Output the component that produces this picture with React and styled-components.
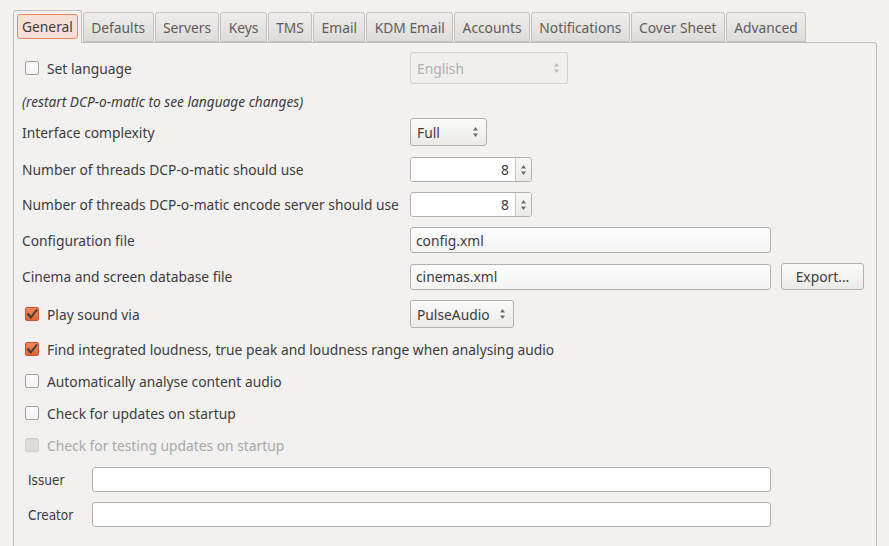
import React from 'react';
import styled, { createGlobalStyle } from 'styled-components';

const GlobalStyle = createGlobalStyle`
  html, body {
    margin: 0;
    padding: 0;
    background: #f2f1f0;
  }
  body {
    font-family: "Noto Sans", "DejaVu Sans", sans-serif;
    font-size: 13.8px;
    color: #3c3c3c;
    overflow: hidden;
  }
`;

const Page = styled.div`
  width: 889px;
  height: 546px;
  padding: 10px 0 0 13px;
  box-sizing: border-box;
  overflow: hidden;
`;

const TabBar = styled.div`
  display: flex;
  align-items: flex-end;
  gap: 1px;
  height: 32px;
  position: relative;
  z-index: 1;
`;

const Tab = styled.div`
  box-sizing: border-box;
  height: ${p => (p.$active ? '33px' : '30px')};
  padding: ${p => (p.$active ? '3px 3px 4px' : '0 7.35px')};
  display: flex;
  align-items: ${p => (p.$active ? 'stretch' : 'center')};
  border: 1px solid ${p => (p.$active ? '#c2c0bc' : '#c5c3bf')};
  border-bottom: ${p => (p.$active ? 'none' : '1px solid #c5c3bf')};
  border-radius: 3px 3px 0 0;
  background: ${p => (p.$active ? '#f2f1f0' : 'linear-gradient(#efeeec, #dcdbd8)')};
  color: ${p => (p.$active ? '#3c3c3c' : '#5d5d5d')};
  white-space: nowrap;
  margin-bottom: ${p => (p.$active ? '-1px' : '0')};
`;

const TabFocus = styled.div`
  display: flex;
  align-items: center;
  padding: 0 4px;
  border: 1px solid #f0875a;
  border-radius: 3px;
  background: #f6e0d7;
`;

const Panel = styled.div`
  width: 864px;
  height: 520px;
  box-sizing: border-box;
  border: 1px solid #bebcb8;
  border-radius: 0 3px 0 0;
  padding: 0 0 0 8px;
  display: flex;
  flex-direction: column;
`;

const Row = styled.div`
  display: flex;
  align-items: center;
  height: ${p => p.$h}px;
  margin-top: ${p => p.$mt}px;
  flex-shrink: 0;
`;

const Label = styled.div`
  width: 388px;
  flex-shrink: 0;
  white-space: nowrap;
`;

const Note = styled.div`
  font-style: italic;
  font-size: 13.7px;
`;

const CheckWrap = styled.label`
  display: flex;
  align-items: center;
  gap: 8px;
  box-sizing: border-box;
  width: ${p => (p.$w ? `${p.$w}px` : 'auto')};
  flex-shrink: 0;
  padding-left: 3px;
  white-space: nowrap;
  color: ${p => (p.$disabled ? '#a9a8a6' : '#3c3c3c')};
`;

const Box = styled.span`
  width: 14px;
  height: 14px;
  box-sizing: border-box;
  border-radius: 2px;
  display: flex;
  align-items: center;
  justify-content: center;
  border: 1px solid ${p => (p.$checked ? '#c2552a' : p.$disabled ? '#cfcecc' : '#a3a19e')};
  background: ${p =>
    p.$checked
      ? 'linear-gradient(#f5885a, #df6535)'
      : p.$disabled
      ? '#dddcda'
      : 'linear-gradient(#ffffff, #f4f4f4)'};
`;

const Select = styled.div`
  box-sizing: border-box;
  width: ${p => p.$w}px;
  height: ${p => p.$h || 28}px;
  display: flex;
  align-items: center;
  justify-content: space-between;
  padding: 0 7px 0 6px;
  border: 1px solid ${p => (p.$disabled ? '#d2d0cd' : '#b3b1ad')};
  border-radius: 3px;
  background: ${p => (p.$disabled ? '#f0efee' : 'linear-gradient(#fbfbfa, #ebeae8)')};
  color: ${p => (p.$disabled ? '#b0afad' : '#3c3c3c')};
`;

const Spin = styled.div`
  display: flex;
  height: 25px;
  box-sizing: border-box;
  border: 1px solid #b3b1ad;
  border-radius: 3px;
  overflow: hidden;
`;

const SpinValue = styled.div`
  width: 105px;
  background: #fff;
  display: flex;
  align-items: center;
  justify-content: flex-end;
  padding-right: 6px;
  box-sizing: border-box;
  border-right: 1px solid #c9c7c3;
`;

const SpinButtons = styled.div`
  width: 15px;
  background: linear-gradient(#f7f7f6, #ebeae8);
  display: flex;
  align-items: center;
  justify-content: center;
`;

const TextInput = styled.div`
  box-sizing: border-box;
  width: ${p => p.$w}px;
  height: ${p => p.$h || 26}px;
  display: flex;
  align-items: center;
  padding: 0 5px;
  border: 1px solid #b3b1ad;
  border-radius: 3px;
  background: ${p => (p.$plain ? '#ffffff' : 'linear-gradient(#fdfdfd, #f3f3f2)')};
  white-space: nowrap;
`;

const Button = styled.div`
  box-sizing: border-box;
  width: 83px;
  height: 27px;
  margin-left: 10px;
  display: flex;
  align-items: center;
  justify-content: center;
  border: 1px solid #b3b1ad;
  border-radius: 3px;
  background: linear-gradient(#fbfbfa, #ebeae8);
`;

const SmallLabel = styled.div`
  width: 70px;
  flex-shrink: 0;
  padding-left: 6px;
  box-sizing: border-box;
  font-family: "DejaVu Sans Condensed", "Liberation Sans Narrow", "Noto Sans", sans-serif;
  font-stretch: condensed;
  font-size: 13.5px;
`;

const Arrows = ({ color = '#6d6c6a' }) => (
  <svg width="7" height="12" viewBox="0 0 7 12">
    <path d="M3.5 1 L6 4.5 L1 4.5 Z" fill={color} />
    <path d="M3.5 11 L6 7.5 L1 7.5 Z" fill={color} />
  </svg>
);

const Tick = () => (
  <svg width="12" height="12" viewBox="0 0 12 12">
    <path d="M1.5 5.5 L4.8 9.5 L11 1.5" fill="none" stroke="#3d3a38" strokeWidth="2" />
  </svg>
);

const Check = ({ checked, disabled, w, children }) => (
  <CheckWrap $w={w} $disabled={disabled}>
    <Box $checked={checked} $disabled={disabled}>{checked && <Tick />}</Box>
    {children}
  </CheckWrap>
);

const tabs = ['General', 'Defaults', 'Servers', 'Keys', 'TMS', 'Email', 'KDM Email', 'Accounts', 'Notifications', 'Cover Sheet', 'Advanced'];

export default function App() {
  return (
    <Page>
      <GlobalStyle />
      <TabBar>
        {tabs.map((t, i) =>
          i === 0 ? (
            <Tab key={t} $active>
              <TabFocus>{t}</TabFocus>
            </Tab>
          ) : (
            <Tab key={t}>{t}</Tab>
          )
        )}
      </TabBar>
      <Panel>
        <Row $h={32} $mt={9}>
          <Check w={388}>Set language</Check>
          <Select $w={158} $h={32} $disabled>
            English
            <Arrows color="#b9b8b6" />
          </Select>
        </Row>
        <Row $h={20} $mt={7}>
          <Note>(restart DCP-o-matic to see language changes)</Note>
        </Row>
        <Row $h={28} $mt={7}>
          <Label>Interface complexity</Label>
          <Select $w={77}>
            Full
            <Arrows />
          </Select>
        </Row>
        <Row $h={25} $mt={11}>
          <Label>Number of threads DCP-o-matic should use</Label>
          <Spin>
            <SpinValue>8</SpinValue>
            <SpinButtons><Arrows /></SpinButtons>
          </Spin>
        </Row>
        <Row $h={25} $mt={10}>
          <Label>Number of threads DCP-o-matic encode server should use</Label>
          <Spin>
            <SpinValue>8</SpinValue>
            <SpinButtons><Arrows /></SpinButtons>
          </Spin>
        </Row>
        <Row $h={26} $mt={10}>
          <Label>Configuration file</Label>
          <TextInput $w={361}>config.xml</TextInput>
        </Row>
        <Row $h={27} $mt={10}>
          <Label>Cinema and screen database file</Label>
          <TextInput $w={361}>cinemas.xml</TextInput>
          <Button>Export...</Button>
        </Row>
        <Row $h={28} $mt={10}>
          <Check checked w={388}>Play sound via</Check>
          <Select $w={104}>
            PulseAudio
            <Arrows />
          </Select>
        </Row>
        <Row $h={20} $mt={11}>
          <Check checked>Find integrated loudness, true peak and loudness range when analysing audio</Check>
        </Row>
        <Row $h={20} $mt={12}>
          <Check>Automatically analyse content audio</Check>
        </Row>
        <Row $h={20} $mt={12}>
          <Check>Check for updates on startup</Check>
        </Row>
        <Row $h={20} $mt={12}>
          <Check disabled>Check for testing updates on startup</Check>
        </Row>
        <Row $h={25} $mt={12}>
          <SmallLabel>Issuer</SmallLabel>
          <TextInput $w={679} $h={25} $plain />
        </Row>
        <Row $h={25} $mt={10}>
          <SmallLabel>Creator</SmallLabel>
          <TextInput $w={679} $h={25} $plain />
        </Row>
      </Panel>
    </Page>
  );
}
